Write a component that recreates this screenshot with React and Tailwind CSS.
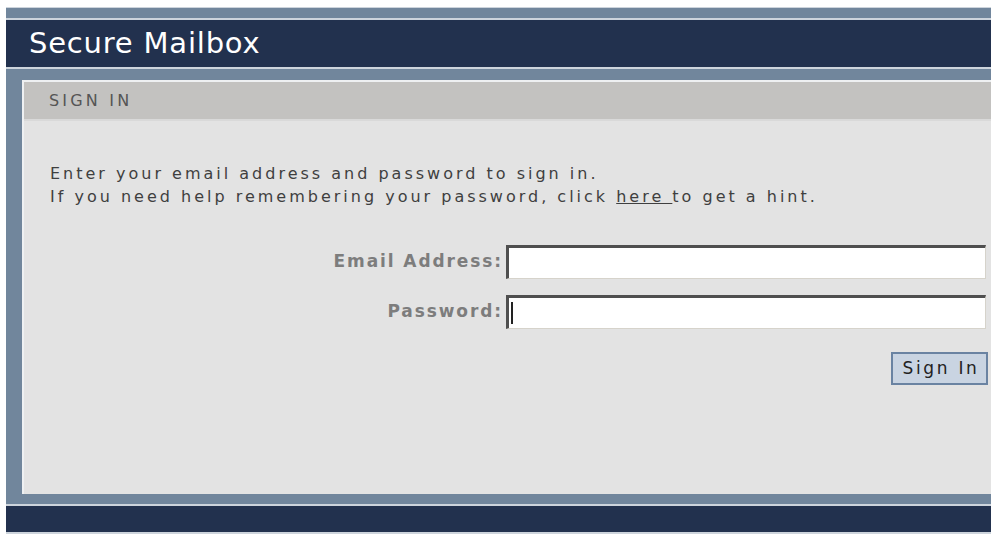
import { useState } from 'react'

// Sign-in frame: steel border, navy title bar, grey panel with the form

function Rule() {
  return <div className="h-[2px] bg-[#cdd4dc]" />
}

function Field({ label, type = 'text', value, onChange, caret }) {
  return (
    <div className="flex items-center">
      <label className="w-[482px] pr-[3px] text-right font-bold text-[17px] tracking-[1.9px] text-[#7d7d7d]">
        {label}
      </label>
      <div className="relative">
        <input
          type={type}
          value={value}
          onChange={e => onChange(e.target.value)}
          className="block w-[480px] h-[34px] bg-white px-[4px] text-[15px] outline-none border-t-[3px] border-l-[3px] border-b border-r border-t-[#4f4f4f] border-l-[#4f4f4f] border-b-[#d6d3cb] border-r-[#d6d3cb]"
        />
        {caret && !value && (
          <span className="absolute left-[5px] top-[7px] w-[2px] h-[22px] bg-[#222]" />
        )}
      </div>
    </div>
  )
}

export default function App() {
  const [email, setEmail] = useState('')
  const [password, setPassword] = useState('')

  return (
    <div className="w-full h-[536px] overflow-hidden bg-white font-['DejaVu_Sans',sans-serif]">
      <div className="ml-[6px] mt-[7px] w-[1010px]">
        <div className="h-[1px] bg-[#cdd4dc]" />
        <div className="h-[10px] bg-[#71869c]" />
        <Rule />

        {/* Title bar */}
        <div className="h-[47px] bg-[#22314e] flex items-center pl-[23px]">
          <h1 className="text-white text-[29px] tracking-[0.8px] leading-none">Secure Mailbox</h1>
        </div>
        <Rule />

        {/* Steel frame around the panel */}
        <div className="bg-[#71869c] pl-[16px] pt-[11px] pb-[10px]">
          <div className="h-[414px] flex flex-col bg-[#e3e3e3] border-t-2 border-l-2 border-[#eef0f2]">
            <div className="h-[39px] shrink-0 bg-[#c3c2c0] border-b-2 border-[#d9d9d9] flex items-center pl-[25px]">
              <span className="text-[16px] tracking-[3.2px] text-[#555]">SIGN IN</span>
            </div>

            <div className="pt-[41px]">
              <p className="pl-[26px] text-[16px] leading-[23px] tracking-[3px] text-[#3f3f3f]">
                Enter your email address and password to sign in.
                <br />
                If you need help remembering your password, click{' '}
                <a href="#" className="underline text-[#3f3f3f]">here </a>to get a hint.
              </p>

              <div className="mt-[37px] flex flex-col gap-[16px]">
                <Field label="Email Address:" value={email} onChange={setEmail} />
                <Field label="Password:" type="password" value={password} onChange={setPassword} caret />
              </div>

              <div className="w-[964px] flex justify-end mt-[23px]">
                <button className="w-[97px] h-[33px] pl-[3px] border-2 border-[#6a83a2] bg-[#c9d4e2] text-[17px] tracking-[2.7px] text-[#222]">
                  Sign In
                </button>
              </div>
            </div>
          </div>
        </div>

        <Rule />
        <div className="h-[26px] bg-[#22314e]" />
        <Rule />
      </div>
    </div>
  )
}
